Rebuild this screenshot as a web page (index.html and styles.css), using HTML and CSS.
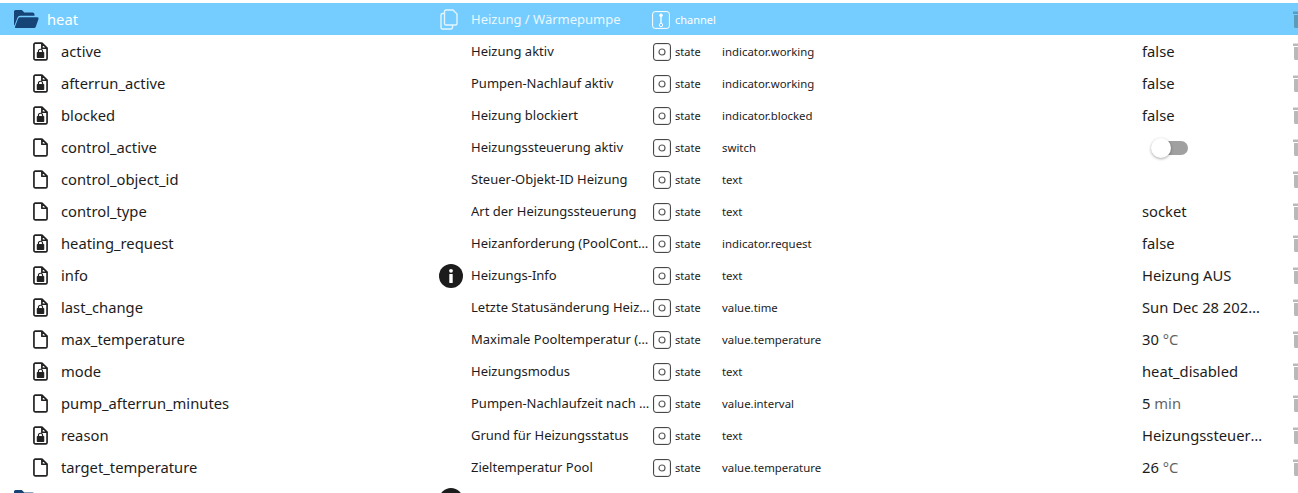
FILE: index.html
```html
<!DOCTYPE html>
<html lang="en">
<head>
  <meta charset="UTF-8">
  <title>Objects - heat</title>
  <link rel="stylesheet" href="styles.css">
</head>
<body>
  <svg class="defs" aria-hidden="true">
    <symbol id="file" viewBox="0 0 16 20"><path d="M2.500 1h7L15 6.500V17.500a1.500 1.500 0 0 1-1.500 1.500h-11A1.500 1.500 0 0 1 1 17.500v-15A1.500 1.500 0 0 1 2.500 1zM9.500 1v5.500H15" fill="none" stroke="currentColor" stroke-width="1.800" stroke-linejoin="round"/></symbol>
    <symbol id="lockfile" viewBox="0 0 16 20"><path d="M2.500 1h7L15 6.500V17.500a1.500 1.500 0 0 1-1.500 1.500h-11A1.500 1.500 0 0 1 1 17.500v-15A1.500 1.500 0 0 1 2.500 1zM9.500 1v5.500H15" fill="none" stroke="currentColor" stroke-width="1.800" stroke-linejoin="round"/><path d="M5.800 11V9.800a2.200 2.200 0 0 1 4.400 0V11" fill="none" stroke="currentColor" stroke-width="1.300"/><rect x="4" y="10.500" width="8" height="6.500" rx=".8" fill="currentColor"/></symbol>
    <symbol id="state" viewBox="0 0 18 18"><rect x=".6" y=".6" width="16.800" height="16.800" rx="2.500" fill="none" stroke="currentColor" stroke-width="1"/><circle cx="9" cy="9" r="3" fill="none" stroke="currentColor" stroke-width="1.200" opacity=".8"/></symbol>
    <symbol id="channel" viewBox="0 0 18 18"><rect x=".6" y=".6" width="16.800" height="16.800" rx="2.500" fill="none" stroke="currentColor" stroke-width="1"/><circle cx="9" cy="4.200" r="1.700" fill="currentColor"/><path d="M9 5v8" stroke="currentColor" stroke-width="1.300"/><circle cx="9" cy="14" r="1.700" fill="none" stroke="currentColor" stroke-width="1"/></symbol>
    <symbol id="trash" viewBox="0 0 16 18"><path d="M0 1.500h16V4H0zM1 5h14v11.500a1.500 1.500 0 0 1-1.500 1.500h-11A1.500 1.500 0 0 1 1 16.500z" fill="currentColor"/></symbol>
    <symbol id="info" viewBox="0 0 24 24"><circle cx="12" cy="12" r="12" fill="currentColor"/><circle cx="12" cy="6.800" r="1.900" fill="#fff"/><rect x="10.300" y="10" width="3.400" height="9" rx=".6" fill="#fff"/></symbol>
  </svg>

  <div class="tree">
    <div class="row folder">
      <div class="name">
        <svg class="folder-icon" viewBox="0 0 26 20"><path d="M2.500 1h6.300l2.500 2.500h8.200a2 2 0 0 1 2 2v1.300H7.200a3 3 0 0 0-2.800 2L1.500 16.500a2 2 0 0 1-.5-1.300V2.500A1.500 1.500 0 0 1 2.500 1z" fill="currentColor"/><path d="M7.300 8.300H24a1.500 1.500 0 0 1 1.400 2l-2.700 7.600a1.800 1.800 0 0 1-1.700 1.100H3a1 1 0 0 1-1-1.300l3-8a2.500 2.500 0 0 1 2.300-1.400z" fill="currentColor"/></svg>
        <span>heat</span>
      </div>
      <div class="hint">
        <svg class="copy-icon" viewBox="0 0 18 21"><path d="M6 1h7l4 4v9.500a1.500 1.500 0 0 1-1.500 1.500H6a1.500 1.500 0 0 1-1.500-1.500v-12A1.500 1.500 0 0 1 6 1zM4.500 4.500H2.500A1.500 1.500 0 0 0 1 6v12.500A1.500 1.500 0 0 0 2.500 20H11a1.500 1.500 0 0 0 1.500-1.500V16" fill="none" stroke="currentColor" stroke-width="1.400"/></svg>
      </div>
      <div class="desc">Heizung / Wärmepumpe</div>
      <div class="type"><svg class="type-icon"><use href="#channel"/></svg><span>channel</span></div>
      <div class="role"></div>
      <div class="value"></div>
      <div class="actions"><svg class="trash"><use href="#trash"/></svg></div>
    </div>

    <div class="row">
      <div class="name"><svg class="file-icon"><use href="#lockfile"/></svg><span>active</span></div>
      <div class="hint"></div>
      <div class="desc">Heizung aktiv</div>
      <div class="type"><svg class="type-icon"><use href="#state"/></svg><span>state</span></div>
      <div class="role">indicator.working</div>
      <div class="value">false</div>
      <div class="actions"><svg class="trash"><use href="#trash"/></svg></div>
    </div>
    <div class="row">
      <div class="name"><svg class="file-icon"><use href="#lockfile"/></svg><span>afterrun_active</span></div>
      <div class="hint"></div>
      <div class="desc">Pumpen-Nachlauf aktiv</div>
      <div class="type"><svg class="type-icon"><use href="#state"/></svg><span>state</span></div>
      <div class="role">indicator.working</div>
      <div class="value">false</div>
      <div class="actions"><svg class="trash"><use href="#trash"/></svg></div>
    </div>
    <div class="row">
      <div class="name"><svg class="file-icon"><use href="#lockfile"/></svg><span>blocked</span></div>
      <div class="hint"></div>
      <div class="desc">Heizung blockiert</div>
      <div class="type"><svg class="type-icon"><use href="#state"/></svg><span>state</span></div>
      <div class="role">indicator.blocked</div>
      <div class="value">false</div>
      <div class="actions"><svg class="trash"><use href="#trash"/></svg></div>
    </div>
    <div class="row">
      <div class="name"><svg class="file-icon"><use href="#file"/></svg><span>control_active</span></div>
      <div class="hint"></div>
      <div class="desc">Heizungssteuerung aktiv</div>
      <div class="type"><svg class="type-icon"><use href="#state"/></svg><span>state</span></div>
      <div class="role">switch</div>
      <div class="value"><div class="switch"><div class="knob"></div></div></div>
      <div class="actions"><svg class="trash"><use href="#trash"/></svg></div>
    </div>
    <div class="row">
      <div class="name"><svg class="file-icon"><use href="#file"/></svg><span>control_object_id</span></div>
      <div class="hint"></div>
      <div class="desc">Steuer-Objekt-ID Heizung</div>
      <div class="type"><svg class="type-icon"><use href="#state"/></svg><span>state</span></div>
      <div class="role">text</div>
      <div class="value"></div>
      <div class="actions"><svg class="trash"><use href="#trash"/></svg></div>
    </div>
    <div class="row">
      <div class="name"><svg class="file-icon"><use href="#file"/></svg><span>control_type</span></div>
      <div class="hint"></div>
      <div class="desc">Art der Heizungssteuerung</div>
      <div class="type"><svg class="type-icon"><use href="#state"/></svg><span>state</span></div>
      <div class="role">text</div>
      <div class="value">socket</div>
      <div class="actions"><svg class="trash"><use href="#trash"/></svg></div>
    </div>
    <div class="row">
      <div class="name"><svg class="file-icon"><use href="#lockfile"/></svg><span>heating_request</span></div>
      <div class="hint"></div>
      <div class="desc">Heizanforderung (PoolControl)</div>
      <div class="type"><svg class="type-icon"><use href="#state"/></svg><span>state</span></div>
      <div class="role">indicator.request</div>
      <div class="value">false</div>
      <div class="actions"><svg class="trash"><use href="#trash"/></svg></div>
    </div>
    <div class="row">
      <div class="name"><svg class="file-icon"><use href="#lockfile"/></svg><span>info</span></div>
      <div class="hint"><svg class="info-icon"><use href="#info"/></svg></div>
      <div class="desc">Heizungs-Info</div>
      <div class="type"><svg class="type-icon"><use href="#state"/></svg><span>state</span></div>
      <div class="role">text</div>
      <div class="value">Heizung AUS</div>
      <div class="actions"><svg class="trash"><use href="#trash"/></svg></div>
    </div>
    <div class="row">
      <div class="name"><svg class="file-icon"><use href="#lockfile"/></svg><span>last_change</span></div>
      <div class="hint"></div>
      <div class="desc">Letzte Statusänderung Heizung</div>
      <div class="type"><svg class="type-icon"><use href="#state"/></svg><span>state</span></div>
      <div class="role">value.time</div>
      <div class="value">Sun Dec 28 2025 10:14:02</div>
      <div class="actions"><svg class="trash"><use href="#trash"/></svg></div>
    </div>
    <div class="row">
      <div class="name"><svg class="file-icon"><use href="#file"/></svg><span>max_temperature</span></div>
      <div class="hint"></div>
      <div class="desc">Maximale Pooltemperatur (Heizung)</div>
      <div class="type"><svg class="type-icon"><use href="#state"/></svg><span>state</span></div>
      <div class="role">value.temperature</div>
      <div class="value">30 <span class="unit">°C</span></div>
      <div class="actions"><svg class="trash"><use href="#trash"/></svg></div>
    </div>
    <div class="row">
      <div class="name"><svg class="file-icon"><use href="#lockfile"/></svg><span>mode</span></div>
      <div class="hint"></div>
      <div class="desc">Heizungsmodus</div>
      <div class="type"><svg class="type-icon"><use href="#state"/></svg><span>state</span></div>
      <div class="role">text</div>
      <div class="value">heat_disabled</div>
      <div class="actions"><svg class="trash"><use href="#trash"/></svg></div>
    </div>
    <div class="row">
      <div class="name"><svg class="file-icon"><use href="#file"/></svg><span>pump_afterrun_minutes</span></div>
      <div class="hint"></div>
      <div class="desc">Pumpen-Nachlaufzeit nach dem Heizen</div>
      <div class="type"><svg class="type-icon"><use href="#state"/></svg><span>state</span></div>
      <div class="role">value.interval</div>
      <div class="value">5 <span class="unit">min</span></div>
      <div class="actions"><svg class="trash"><use href="#trash"/></svg></div>
    </div>
    <div class="row">
      <div class="name"><svg class="file-icon"><use href="#lockfile"/></svg><span>reason</span></div>
      <div class="hint"></div>
      <div class="desc">Grund für Heizungsstatus</div>
      <div class="type"><svg class="type-icon"><use href="#state"/></svg><span>state</span></div>
      <div class="role">text</div>
      <div class="value">Heizungssteuerung aus</div>
      <div class="actions"><svg class="trash"><use href="#trash"/></svg></div>
    </div>
    <div class="row">
      <div class="name"><svg class="file-icon"><use href="#file"/></svg><span>target_temperature</span></div>
      <div class="hint"></div>
      <div class="desc">Zieltemperatur Pool</div>
      <div class="type"><svg class="type-icon"><use href="#state"/></svg><span>state</span></div>
      <div class="role">value.temperature</div>
      <div class="value">26 <span class="unit">°C</span></div>
      <div class="actions"><svg class="trash"><use href="#trash"/></svg></div>
    </div>

    <!-- next folder, cut off by the window -->
    <div class="row">
      <div class="name">
        <svg class="folder-icon" viewBox="0 0 26 20"><path d="M2.500 1h6.300l2.500 2.500h8.200a2 2 0 0 1 2 2V19H2.500A1.500 1.500 0 0 1 1 17.500v-15A1.500 1.500 0 0 1 2.500 1z" fill="currentColor"/></svg>
      </div>
      <div class="hint"><svg class="info-icon"><use href="#info"/></svg></div>
    </div>
  </div>
</body>
</html>
```

FILE: styles.css
```css
html, body {
  height: 100%;
  margin: 0;
  overflow: hidden;
}
body {
  background: #fff;
  color: #1c1c1c;
  font-family: "Noto Sans", "Open Sans", sans-serif;
  padding-top: 3px;
  box-sizing: border-box;
}
.defs {
  display: none;
}
.row {
  display: grid;
  grid-template-columns: 440px 31px 182px 69px 420px 151px 16px;
  height: 32px;
  align-items: center;
  width: 1309px;
}
.row.folder {
  background: #75cdff;
  color: #fff;
}
.name {
  display: flex;
  align-items: center;
  padding-left: 33px;
  font-size: 14.750px;
  white-space: nowrap;
}
.row:has(.folder-icon) .name {
  padding-left: 13px;
}
.file-icon {
  width: 15px;
  height: 19px;
  margin-right: 13px;
  color: #222;
}
.folder-icon {
  width: 26px;
  height: 20px;
  margin-right: 8px;
  color: #164477;
}
.hint {
  display: flex;
  align-items: center;
}
.copy-icon {
  width: 18px;
  height: 21px;
  color: #e2f5ff;
}
.info-icon {
  width: 24px;
  height: 24px;
  margin: 2px 0 0 -1px;
  color: #1c1c1c;
}
.desc {
  font-size: 13px;
  padding-right: 2px;
  white-space: nowrap;
  overflow: hidden;
  text-overflow: ellipsis;
}
.folder .desc {
  color: #eaf7ff;
}
.type {
  display: flex;
  align-items: center;
  font-size: 11px;
}
.type-icon {
  width: 18px;
  height: 18px;
  margin-right: 4px;
  margin-top: 1px;
  color: #333;
}
.folder .type-icon {
  margin-left: -1px;
  margin-right: 5px;
  color: #fff;
}
.role {
  font-size: 11.400px;
  margin-top: 1px;
  white-space: nowrap;
}
.value {
  font-size: 14.750px;
  width: 124px;
  white-space: nowrap;
  overflow: hidden;
  text-overflow: ellipsis;
}
.unit {
  opacity: .7;
}
.value:has(.switch) {
  overflow: visible;
}
.switch {
  position: relative;
  width: 28px;
  height: 14px;
  margin: 2px 0 0 18px;
  border-radius: 7px;
  background: #a0a0a0;
}
.knob {
  position: absolute;
  left: -9px;
  top: -3px;
  width: 20px;
  height: 20px;
  border-radius: 50%;
  background: #fff;
  box-shadow: 0 1px 3px rgba(0, 0, 0, .35);
}
.actions {
  display: flex;
  align-items: center;
}
.trash {
  width: 16px;
  height: 18px;
  color: #b9b9b9;
}
.folder .trash {
  color: #5a9cbc;
}
```
